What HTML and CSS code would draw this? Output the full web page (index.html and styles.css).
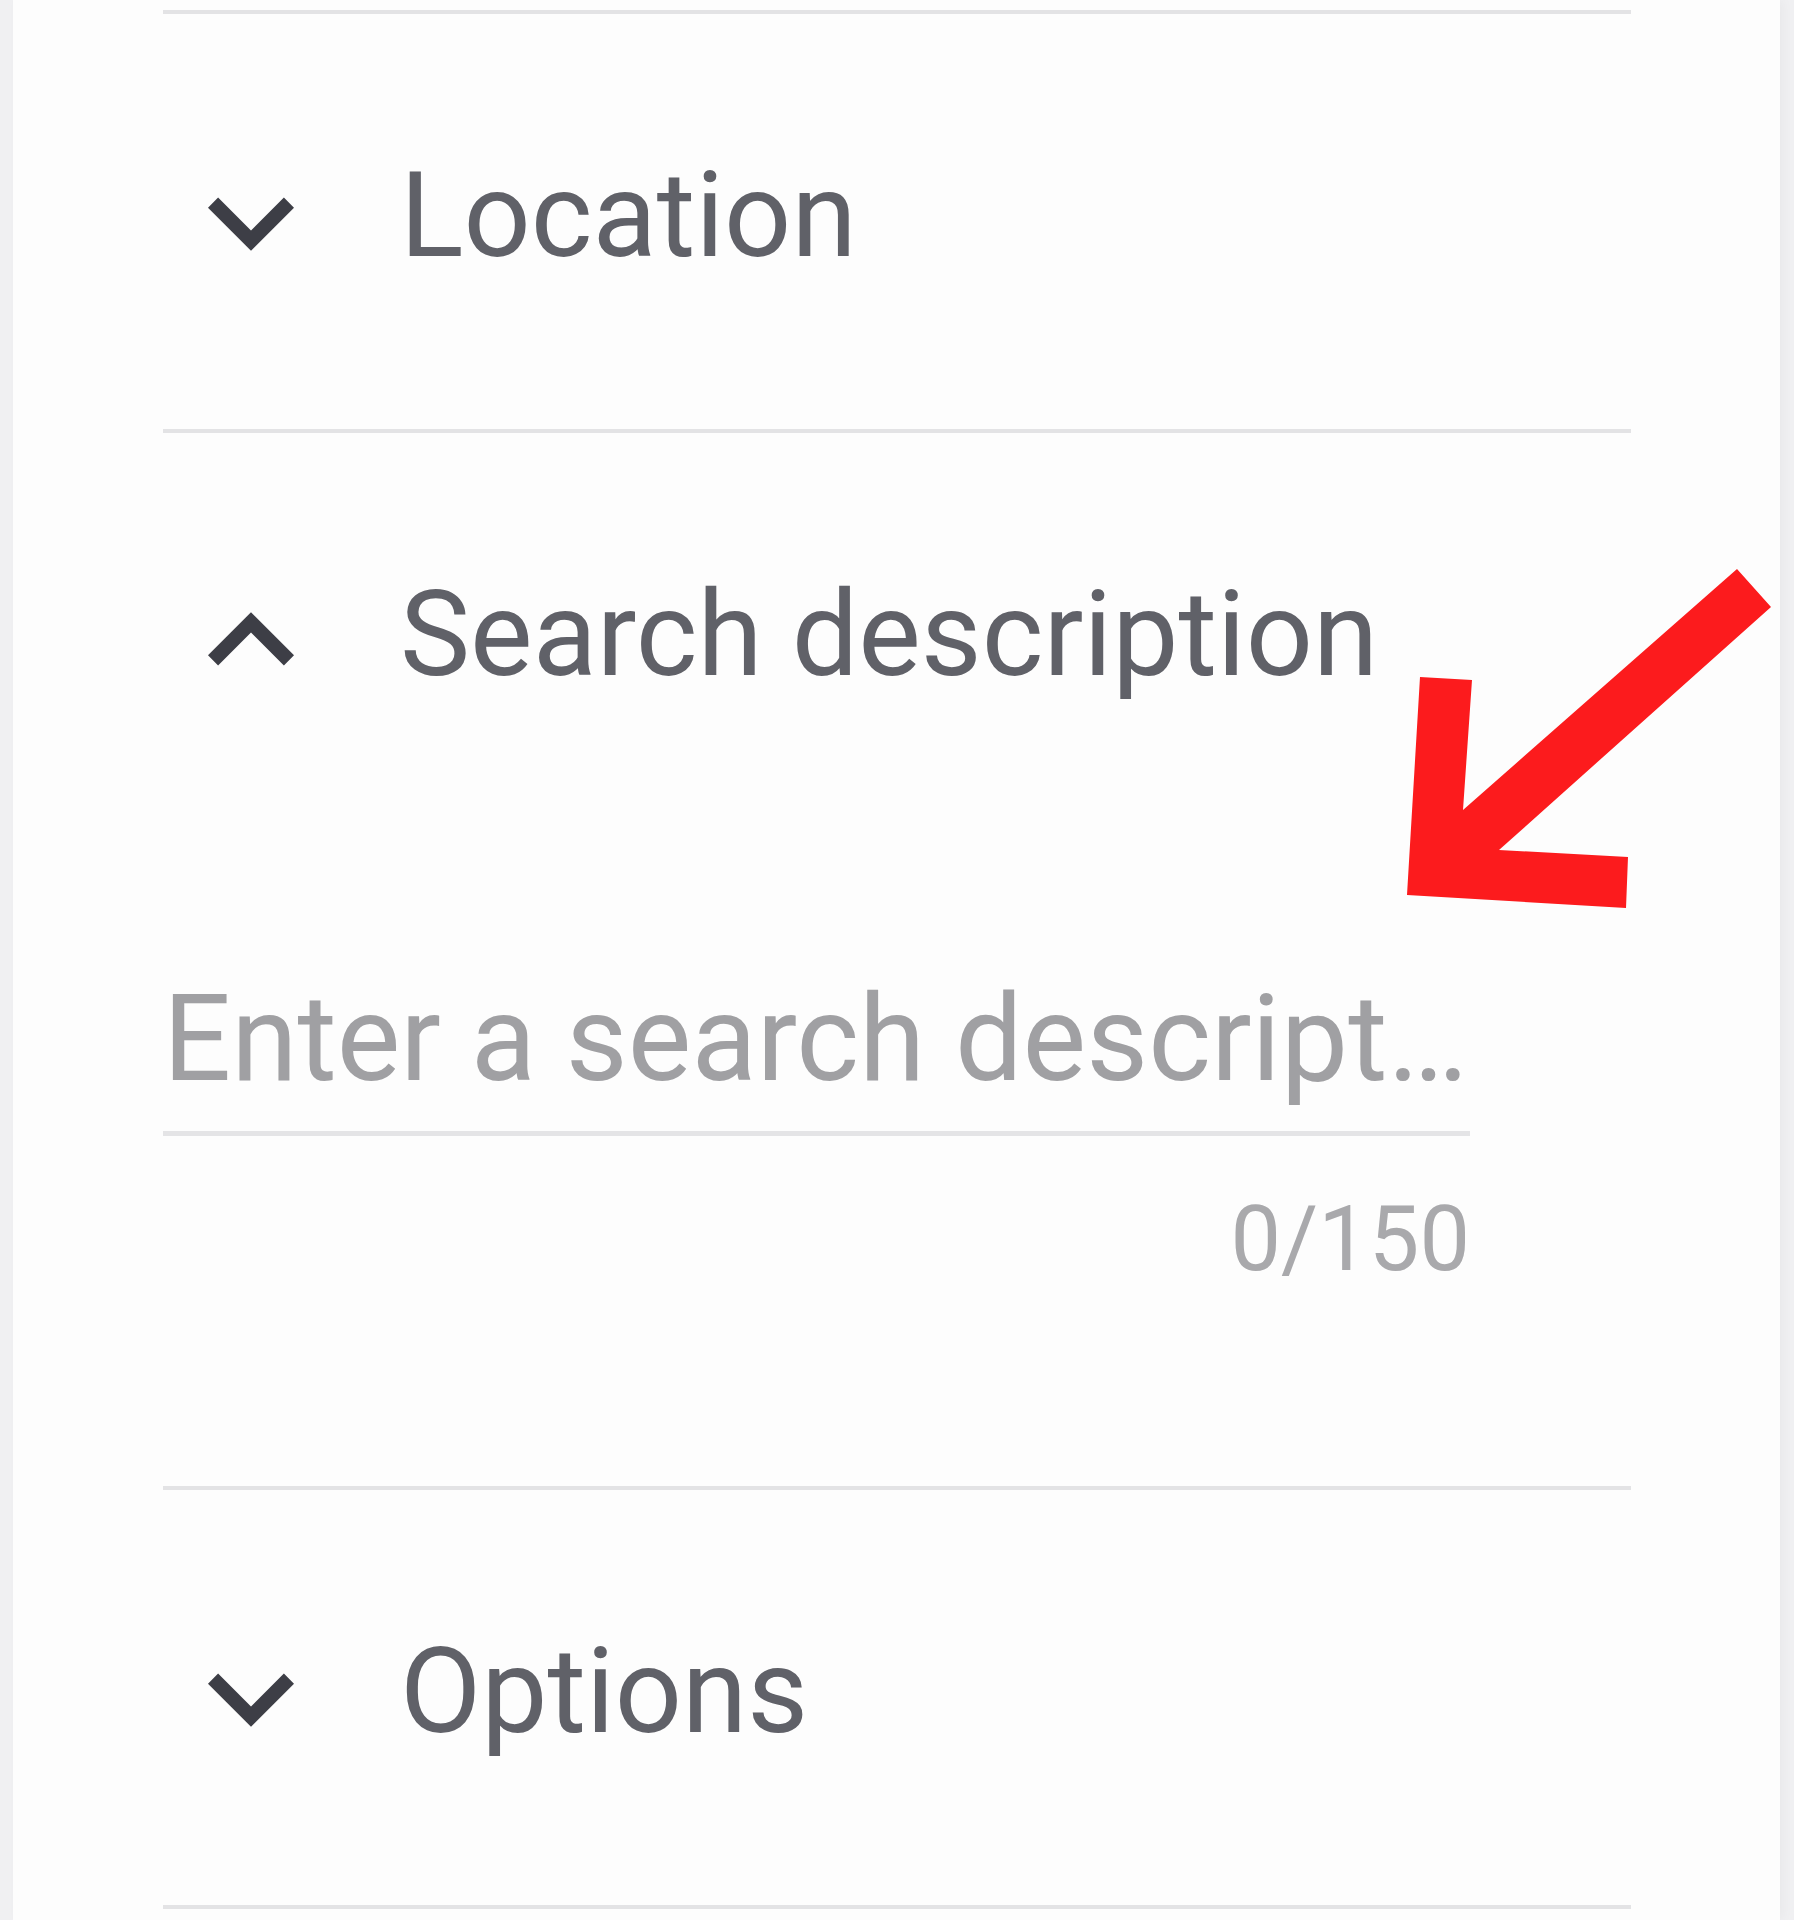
FILE: index.html
```html
<!DOCTYPE html>
<html lang="en">
<head>
    <meta charset="UTF-8">
    <title>Search filters</title>
    <meta name="viewport" content="width=device-width, initial-scale=1.0">
    <link rel="stylesheet" href="styles.css">
</head>
<body>
    <!-- Filter panel -->
    <div class="panel">
        <div class="accordion">
            <section class="item">
                <div class="item-header">
                    <svg class="chevron" viewBox="0 0 24 24"><path d="M16.59 8.59L12 13.17 7.41 8.59 6 10l6 6 6-6z"/></svg>
                    <span class="title">Location</span>
                </div>
            </section>

            <section class="item open">
                <div class="item-header">
                    <svg class="chevron" viewBox="0 0 24 24"><path d="M12 8l-6 6 1.41 1.41L12 10.83l4.59 4.58L18 14z"/></svg>
                    <span class="title">Search description</span>
                </div>
                <div class="item-body">
                    <div class="field">
                        <input type="text" class="field-input" maxlength="150" placeholder="Enter a search description">
                        <div class="field-hint">0/150</div>
                    </div>
                </div>
            </section>

            <section class="item">
                <div class="item-header">
                    <svg class="chevron" viewBox="0 0 24 24"><path d="M16.59 8.59L12 13.17 7.41 8.59 6 10l6 6 6-6z"/></svg>
                    <span class="title">Options</span>
                </div>
            </section>
        </div>
    </div>

    <!-- Annotation arrow -->
    <svg class="annotation" viewBox="0 0 380 360">
        <polygon points="20,117 72,120 63,250 337,9 371,47 99,290 228,297 226,348 7,335"/>
    </svg>
</body>
</html>
```

FILE: styles.css
```css
/* Reset */
* {
    box-sizing: border-box;
    margin: 0;
    padding: 0;
}
/* Base */
body {
    font-family: Roboto, "Liberation Sans", sans-serif;
    background-color: #f0f0f2;
    color: #606168;
    height: 1920px;
    overflow: hidden;
    position: relative;
}
/* Panel */
.panel {
    margin: 0 14px 0 13px;
    min-height: 1920px;
    padding: 10px 149px 0 150px;
    background-color: #fdfdfd;
    box-shadow: 4px 0 10px rgba(0, 0, 0, 0.03);
}
/* Accordion items */
.item {
    border-top: 4px solid #e3e3e5;
}
.item:last-child {
    border-bottom: 4px solid #e3e3e5;
}
.item-header {
    display: flex;
    align-items: center;
    height: 415px;
    padding-left: 2px;
}
.chevron {
    width: 172px;
    height: 172px;
    fill: #3d3e46;
    flex-shrink: 0;
}
.title {
    margin-left: 63px;
    padding-bottom: 12px;
    font-size: 118px;
    line-height: 140px;
    white-space: nowrap;
}
/* Expanded body */
.item-body {
    padding: 121px 0 194px;
}
.field {
    width: 1307px;
}
.field-input {
    display: block;
    width: 100%;
    height: 167px;
    padding: 0 0 22px;
    border: none;
    border-bottom: 5px solid #e4e4e6;
    background: transparent;
    font-family: inherit;
    font-size: 120px;
    line-height: 140px;
    color: #606168;
    text-overflow: ellipsis;
    outline: none;
}
.field-input::placeholder {
    color: #a0a0a3;
}
.field-hint {
    margin-top: 51px;
    text-align: right;
    font-size: 90px;
    line-height: 105px;
    color: #a9a9ac;
}
/* Annotation */
.annotation {
    position: absolute;
    left: 1400px;
    top: 560px;
    width: 380px;
    height: 360px;
    fill: #fc1b1d;
}
```
